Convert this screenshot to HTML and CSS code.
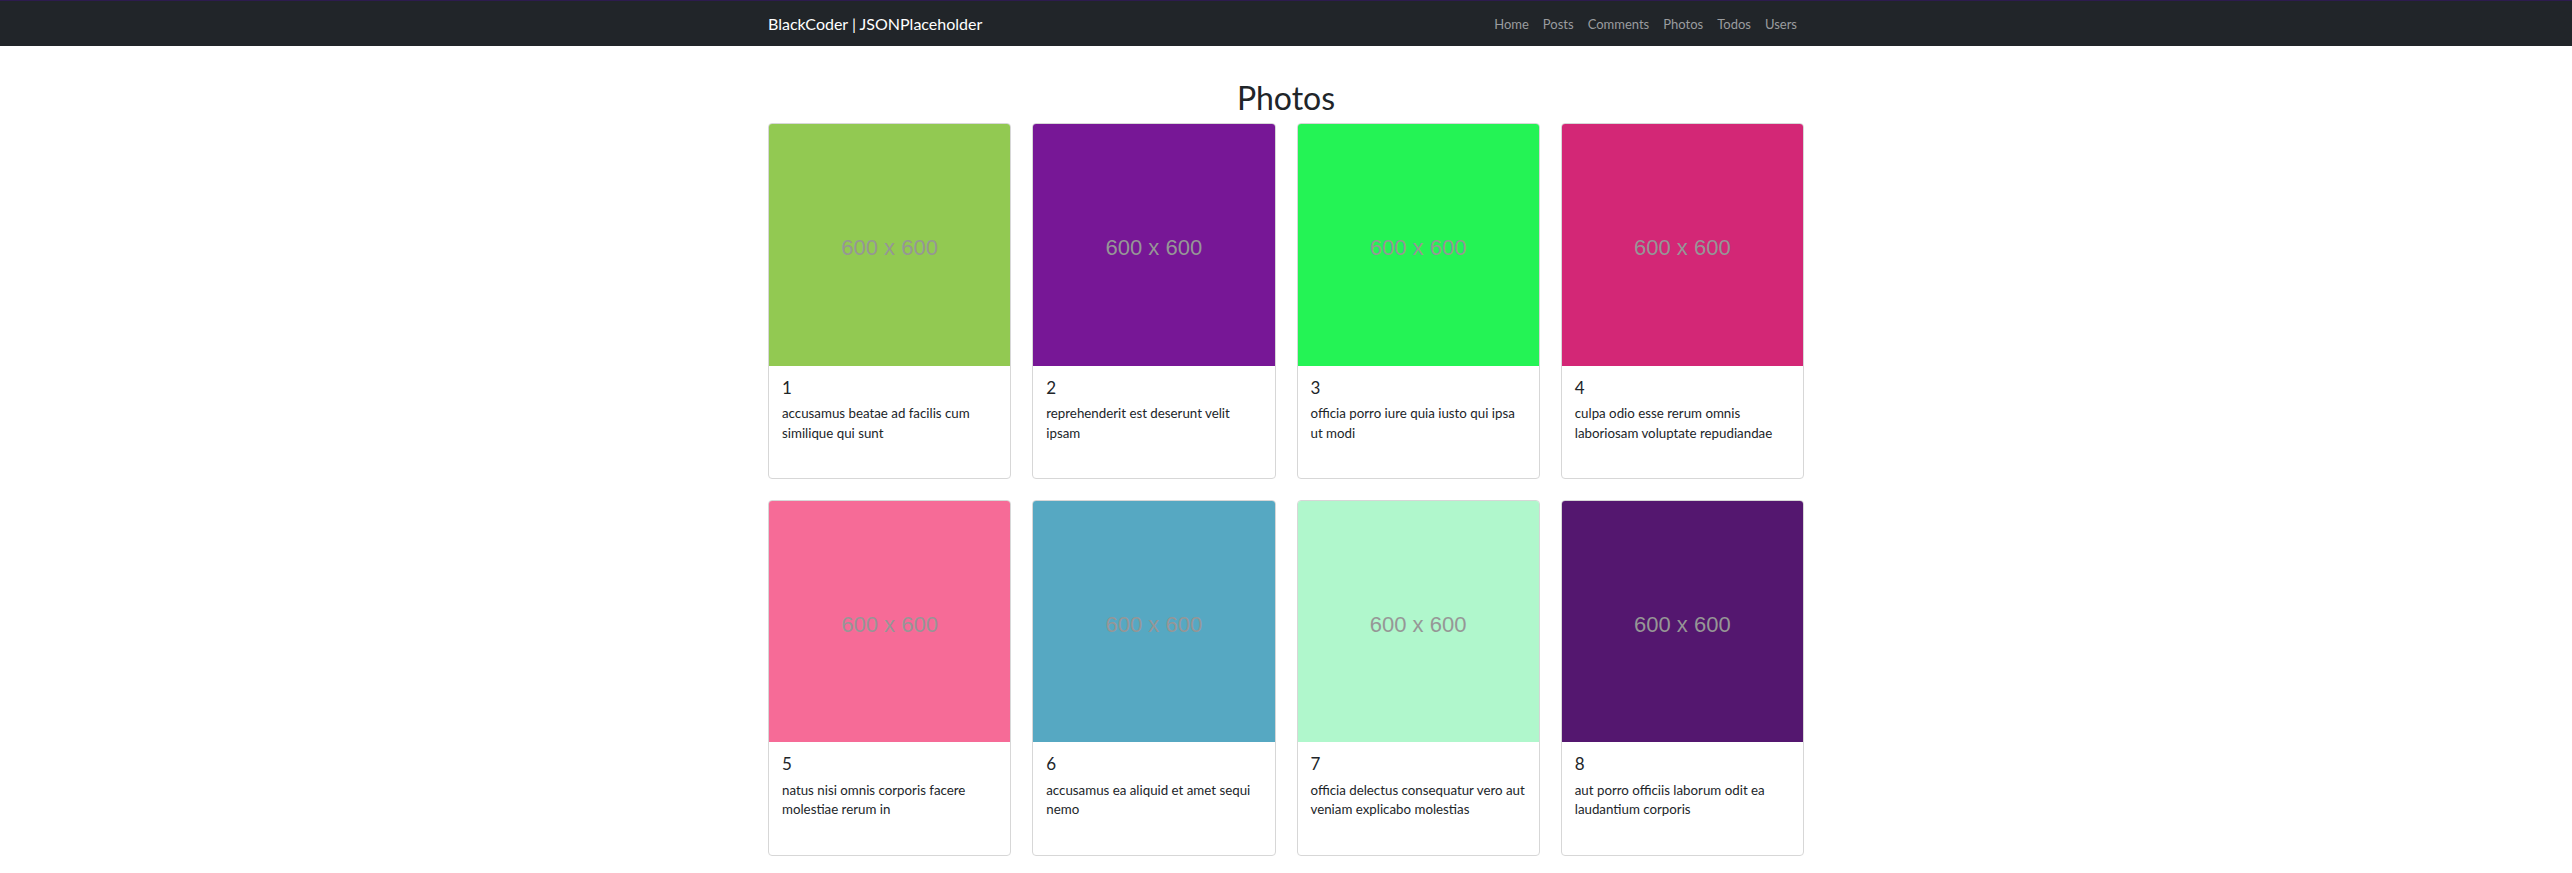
FILE: index.html
```html
<!DOCTYPE html>
<html lang="en">
<head>
<meta charset="utf-8">
<title>Photos | BlackCoder</title>
<link rel="stylesheet" href="styles.css">
</head>
<body>
<nav class="navbar">
  <div class="container navbar-inner">
    <a class="brand" href="#">BlackCoder | JSONPlaceholder</a>
    <ul class="nav">
      <li><a class="nav-link" href="#">Home</a></li>
      <li><a class="nav-link" href="#">Posts</a></li>
      <li><a class="nav-link" href="#">Comments</a></li>
      <li><a class="nav-link" href="#">Photos</a></li>
      <li><a class="nav-link" href="#">Todos</a></li>
      <li><a class="nav-link" href="#">Users</a></li>
    </ul>
  </div>
</nav>
<main class="container">
  <h1 class="page-title">Photos</h1>
  <div class="grid">
    <div class="card">
      <div class="thumb c1"><span>600 x 600</span></div>
      <div class="card-body"><h5 class="card-title">1</h5><p class="card-text">accusamus beatae ad facilis cum similique qui sunt</p></div>
    </div>
    <div class="card">
      <div class="thumb c2"><span>600 x 600</span></div>
      <div class="card-body"><h5 class="card-title">2</h5><p class="card-text">reprehenderit est deserunt velit ipsam</p></div>
    </div>
    <div class="card">
      <div class="thumb c3"><span>600 x 600</span></div>
      <div class="card-body"><h5 class="card-title">3</h5><p class="card-text">officia porro iure quia iusto qui ipsa ut modi</p></div>
    </div>
    <div class="card">
      <div class="thumb c4"><span>600 x 600</span></div>
      <div class="card-body"><h5 class="card-title">4</h5><p class="card-text">culpa odio esse rerum omnis laboriosam voluptate repudiandae</p></div>
    </div>
    <div class="card">
      <div class="thumb c5"><span>600 x 600</span></div>
      <div class="card-body"><h5 class="card-title">5</h5><p class="card-text">natus nisi omnis corporis facere molestiae rerum in</p></div>
    </div>
    <div class="card">
      <div class="thumb c6"><span>600 x 600</span></div>
      <div class="card-body"><h5 class="card-title">6</h5><p class="card-text">accusamus ea aliquid et amet sequi nemo</p></div>
    </div>
    <div class="card">
      <div class="thumb c7"><span>600 x 600</span></div>
      <div class="card-body"><h5 class="card-title">7</h5><p class="card-text">officia delectus consequatur vero aut veniam explicabo molestias</p></div>
    </div>
    <div class="card">
      <div class="thumb c8"><span>600 x 600</span></div>
      <div class="card-body"><h5 class="card-title">8</h5><p class="card-text">aut porro officiis laborum odit ea laudantium corporis</p></div>
    </div>
  </div>
</main>
</body>
</html>
```
FILE: styles.css
```css
* { box-sizing: border-box; }
html, body { margin: 0; padding: 0; }
body {
  font-family: Lato, "Noto Sans", "DejaVu Sans", sans-serif;
  color: #212529;
  background: #fff;
}
.container {
  width: 1036px;
  margin: 0 auto;
}
.navbar {
  background: #212529;
  border-top: 1px solid #2d1b4e;
  height: 46px;
}
.navbar-inner {
  height: 45px;
  display: flex;
  align-items: center;
  justify-content: space-between;
}
.brand {
  color: #fff;
  text-decoration: none;
  font-size: 16px;
}
.nav {
  list-style: none;
  margin: 0;
  padding: 0;
  display: flex;
}
.nav-link {
  display: block;
  padding: 0 7px;
  color: #9a9c9f;
  text-decoration: none;
  font-size: 13px;
}
.page-title {
  margin: 33px 0 6px;
  font-size: 32px;
  font-weight: 400;
  line-height: 1.2;
  text-align: center;
}
.grid {
  display: grid;
  grid-template-columns: repeat(4, 1fr);
  gap: 21px;
}
.card {
  border: 1px solid #d7d7d7;
  border-radius: 4px;
  overflow: hidden;
  background: #fff;
}
.thumb {
  aspect-ratio: 1 / 1;
  display: flex;
  align-items: center;
  justify-content: center;
  padding-top: 6px;
}
.thumb span {
  font-family: "Liberation Sans", Arial, sans-serif;
  font-size: 22px;
  line-height: 1;
  color: #969696;
}
.c1 { background: #92c952; }
.c2 { background: #771796; }
.c3 { background: #24f355; }
.c4 { background: #d32776; }
.c5 { background: #f66b97; }
.c6 { background: #56a8c2; }
.c7 { background: #b0f7cc; }
.c8 { background: #54176f; }
.card-body {
  padding: 12px 10px 12px 13px;
}
.card-title {
  margin: 0 0 6px;
  font-size: 17px;
  font-weight: 400;
  line-height: 1.2;
}
.card-text {
  margin: 0 0 23px;
  font-size: 13.3px;
  line-height: 19.5px;
  height: 39px;
}
```
